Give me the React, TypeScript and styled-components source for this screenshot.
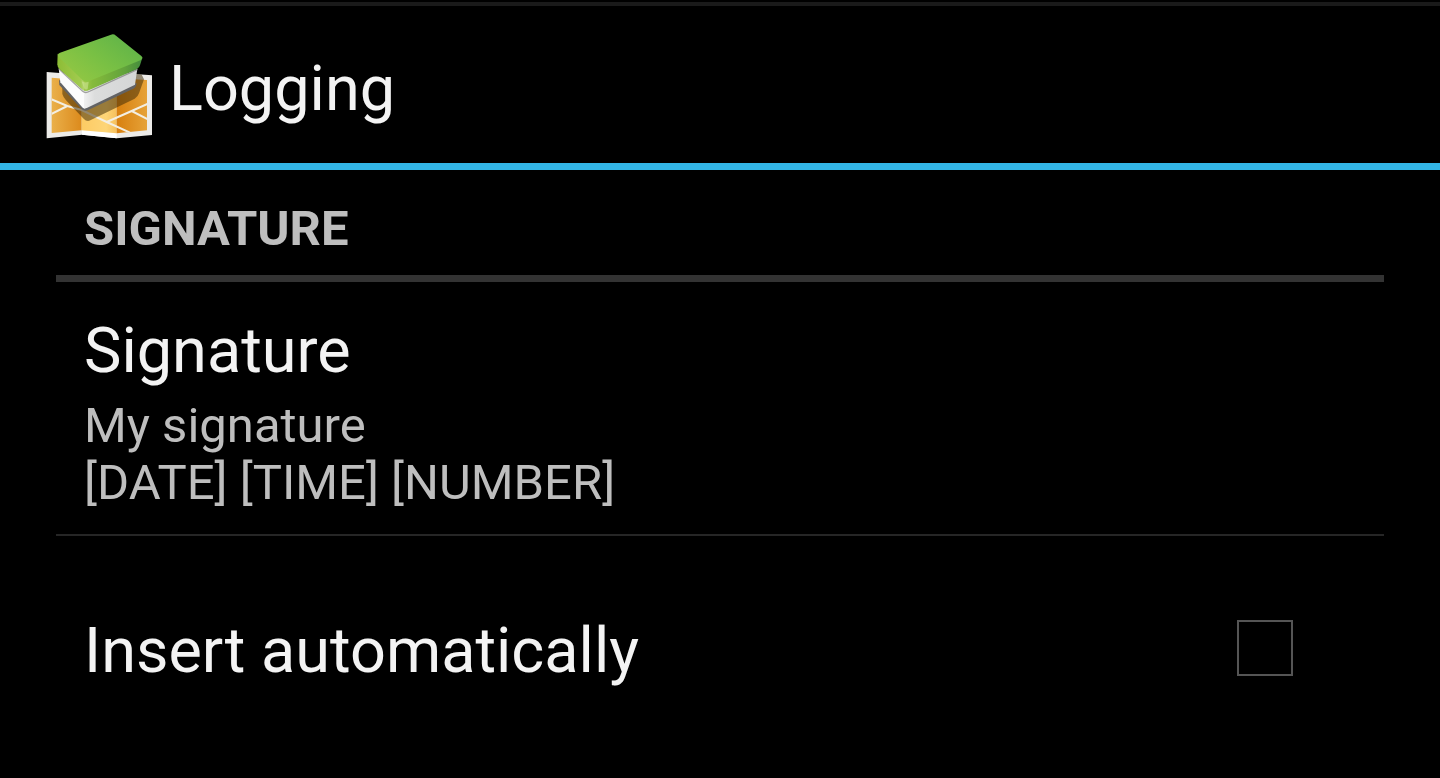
import React from 'react';
import styled, { createGlobalStyle } from 'styled-components';

const GlobalStyle = createGlobalStyle`
  *, *::before, *::after { box-sizing: border-box; }
  html { background: #000; }
  body {
    margin: 0;
    background: #000;
    color: #f3f3f3;
    font-family: Roboto, "Noto Sans", sans-serif;
  }
`;

const Screen = styled.div`
  display: flex;
  flex-direction: column;
  min-height: 100vh;
  padding-top: 2px;
`;

const ActionBar = styled.header`
  display: flex;
  align-items: center;
  gap: 15px;
  padding: 28px 42px 19px;
  border-top: 4px solid #1a1a1a;
  border-bottom: 7px solid #33b5e5;
`;

const AppIcon = styled.svg`
  flex: none;
  width: 112px;
  height: 110px;
`;

const ScreenTitle = styled.h1`
  margin: 0;
  font-size: 63px;
  line-height: 74px;
  font-weight: 400;
`;

const Preferences = styled.main`
  padding: 0 56px;
`;

const CategoryTitle = styled.h2`
  margin: 0;
  padding: 30px 28px 18px;
  border-bottom: 7px solid #333;
  color: #bebebe;
  font-size: 49px;
  line-height: 57px;
  font-weight: 700;
  text-transform: uppercase;
`;

const PreferenceButton = styled.button`
  display: flex;
  flex-direction: column;
  gap: 9px;
  width: 100%;
  padding: 32px 28px 23px;
  border: 0;
  border-bottom: 2px solid #262626;
  background: none;
  color: inherit;
  font-family: inherit;
  text-align: left;
  cursor: pointer;
`;

const PreferenceRow = styled.div`
  display: flex;
  align-items: flex-start;
  justify-content: space-between;
  padding: 78px 28px;
`;

const PreferenceTitle = styled.span`
  font-size: 63px;
  line-height: 74px;
`;

const PreferenceSummary = styled.span`
  color: #bebebe;
  font-size: 49px;
  line-height: 57px;
  white-space: pre-line;
`;

const Checkbox = styled.input`
  appearance: none;
  flex: none;
  width: 56px;
  height: 56px;
  margin: 6px 63px 0 0;
  border: 2px solid #555;
  background: #000;
  cursor: pointer;

  &:checked {
    background: #33b5e5;
  }
`;

function MapBookIcon() {
  return (
    <AppIcon viewBox="36 42 336 330" aria-hidden="true">
      <defs>
        <linearGradient id="mapLeft" x1="0" x2="1">
          <stop offset="0" stopColor="#eab04a" />
          <stop offset="1" stopColor="#dc8a1c" />
        </linearGradient>
        <linearGradient id="mapMiddle" x1="0" x2="1">
          <stop offset="0" stopColor="#fdcb64" />
          <stop offset="0.7" stopColor="#fdd577" />
          <stop offset="1" stopColor="#f6c05c" />
        </linearGradient>
        <linearGradient id="mapRight" x1="0" x2="1">
          <stop offset="0" stopColor="#d8800f" />
          <stop offset="1" stopColor="#e6a238" />
        </linearGradient>
        <linearGradient id="coverTop" x1="0" y1="0.7" x2="0.8" y2="0.1">
          <stop offset="0" stopColor="#92c743" />
          <stop offset="0.5" stopColor="#79c044" />
          <stop offset="1" stopColor="#63b548" />
        </linearGradient>
        <linearGradient id="coverLeft" x1="0" x2="1">
          <stop offset="0" stopColor="#8dbd35" />
          <stop offset="0.8" stopColor="#a2cb50" />
          <stop offset="1" stopColor="#c6e08b" />
        </linearGradient>
        <linearGradient id="coverRight" x1="0" x2="1">
          <stop offset="0" stopColor="#a4cc4c" />
          <stop offset="0.15" stopColor="#86bb3b" />
          <stop offset="0.7" stopColor="#62a33b" />
          <stop offset="1" stopColor="#438b3d" />
        </linearGradient>
        <linearGradient id="pagesRight" x1="0" x2="1">
          <stop offset="0" stopColor="#f1f1f1" />
          <stop offset="0.2" stopColor="#dcdddd" />
          <stop offset="1" stopColor="#d4d6d6" />
        </linearGradient>
        <clipPath id="mapInside">
          <path d="M65 173 L155 179 V331 L65 339 Z M155 179 H260 V340 L155 331 Z M260 179 L351 180 V331 L260 340 Z" />
        </clipPath>
        <clipPath id="mapSheet">
          <path d="M50 156 L156 164 L260 158 L366 166 V345 L260 355 L156 344 L50 355 Z" />
        </clipPath>
      </defs>
      <path d="M50 156 L156 164 L260 158 L366 166 V345 L260 355 L156 344 L50 355 Z" fill="#ecebe8" />
      <path d="M156 330 L260 340 V355 L156 344 Z" fill="#fff" />
      <path d="M65 173 L155 181 V331 L65 339 Z" fill="url(#mapLeft)" />
      <path d="M155 181 L260 175 V340 L155 331 Z" fill="url(#mapMiddle)" />
      <path d="M260 175 L351 180 V331 L260 340 Z" fill="url(#mapRight)" />
      <g clipPath="url(#mapInside)" fill="none" stroke="#f3eee2" strokeWidth="6">
        <path d="M62 237 L112 258 L155 270 L230 306 L300 338" />
        <path d="M62 283 L112 258" />
        <path d="M230 306 L305 273 L354 251" />
        <path d="M305 273 L354 298" />
      </g>
      <path
        clipPath="url(#mapSheet)"
        d="M97 190 L97 222 Q100 232 108 241 L161 296 Q170 306 181 301 L314 236 Q324 230 327 220 L342 178 L333 160 Z"
        fill="#3f2b08"
        fillOpacity="0.53"
      />
      <path d="M87 181 L88 195 L155 268 Q163 275 173 271 L313 205 Q319 201 320 190 Z" fill="#626365" />
      <path d="M86 145 L91 187 L158 263 Q161 266 166 265 V215 Z" fill="#fcfcfc" />
      <path d="M162 214 V265 Q166 266 172 263 L315 194 L322 146 Z" fill="url(#pagesRight)" />
      <path d="M86 146 L158 214 Q165 220 174 216 L323 148" fill="none" stroke="#777" strokeOpacity="0.65" strokeWidth="4" />
      <path d="M83 101 L82 133 Q82 141 88 147 L158 209 Q164 214 169 213 L170 178 Z" fill="url(#coverLeft)" />
      <path d="M160 180 L162 209 Q167 215 176 211 L321 147 Q328 143 330 136 L337 113 Z" fill="url(#coverRight)" />
      <path
        d="M243 44 Q251 41 258 47 L334 108 Q341 114 333 120 L178 183 Q167 188 158 181 L87 112 Q79 102 90 98 Z"
        fill="url(#coverTop)"
      />
      <path d="M155 184 Q165 190 176 185 L173 207 Q167 211 162 205 Z" fill="#d0e59b" fillOpacity="0.55" />
    </AppIcon>
  );
}

export default function App() {
  return (
    <>
      <GlobalStyle />
      <Screen>
        <ActionBar>
          <MapBookIcon />
          <ScreenTitle>Logging</ScreenTitle>
        </ActionBar>
        <Preferences>
          <CategoryTitle>Signature</CategoryTitle>
          <PreferenceButton type="button">
            <PreferenceTitle>Signature</PreferenceTitle>
            <PreferenceSummary>{'My signature\n[DATE] [TIME] [NUMBER]'}</PreferenceSummary>
          </PreferenceButton>
          <PreferenceRow>
            <PreferenceTitle as="label" htmlFor="insert-automatically">
              Insert automatically
            </PreferenceTitle>
            <Checkbox type="checkbox" id="insert-automatically" />
          </PreferenceRow>
        </Preferences>
      </Screen>
    </>
  );
}
